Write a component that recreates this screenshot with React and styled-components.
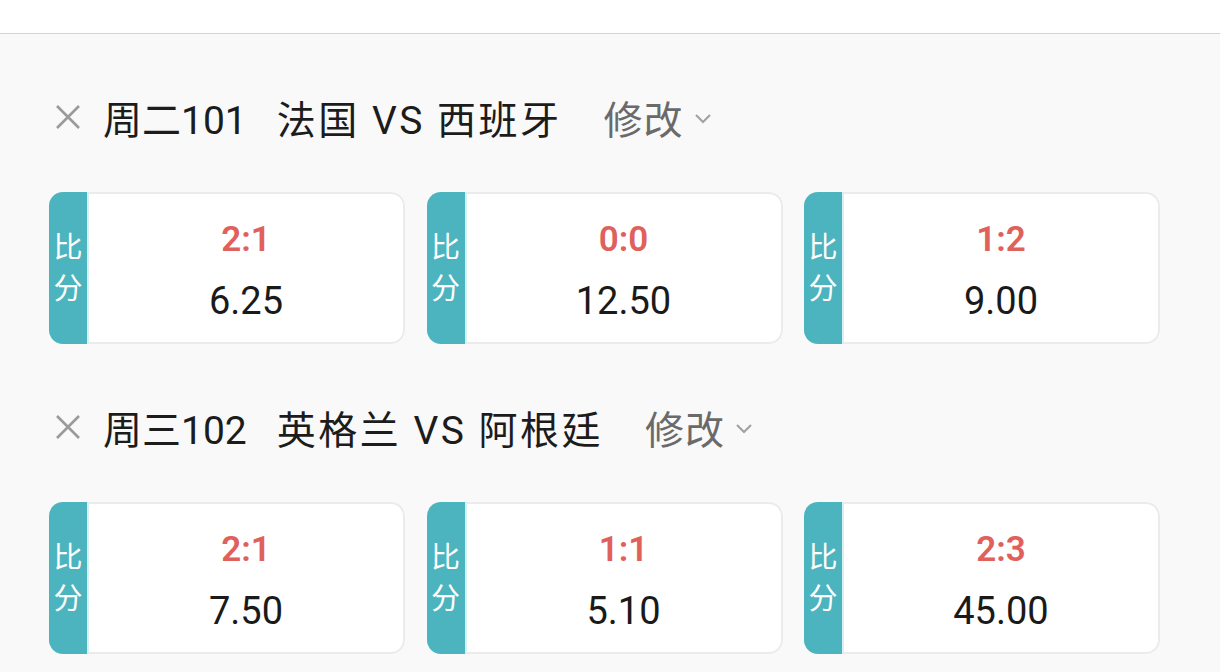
import React from "react";
import styled, { createGlobalStyle } from "styled-components";

const GlobalStyle = createGlobalStyle`
	html, body {
		margin: 0;
		padding: 0;
		background: #f9f9f9;
		font-family: Roboto, "Noto Sans CJK SC", sans-serif;
	}
`;

const Page = styled.div`
	width: 1220px;
	height: 672px;
	overflow: hidden;
	background: #f9f9f9;
`;

const TopBar = styled.div`
	height: 33px;
	background: #fff;
	border-bottom: 1px solid #d4d4d4;
`;

const Content = styled.div`
	padding: 53px 0 0 49px;
`;

const Section = styled.section`
	& + & {
		margin-top: 53px;
	}
`;

const MatchHeader = styled.div`
	display: flex;
	align-items: center;
	height: 60px;
	margin-bottom: 45px;
	color: #1c1c1c;
	font-size: 39px;
`;

const CloseIcon = styled.svg`
	width: 26px;
	height: 26px;
	margin-left: 6px;
	margin-right: 22px;
	flex-shrink: 0;
`;

const MatchNo = styled.span`
	margin-right: 30px;
`;

const Teams = styled.span`
	letter-spacing: 2.5px;
	margin-right: 42px;
`;

const Edit = styled.span`
	color: #6a6a6a;
	display: flex;
	align-items: center;
	letter-spacing: 1px;
`;

const Chevron = styled.svg`
	width: 18px;
	height: 12px;
	margin-left: 10px;
	margin-top: 4px;
`;

const Grid = styled.div`
	display: grid;
	grid-template-columns: repeat(3, 356px);
	column-gap: 21.5px;
`;

const Card = styled.div`
	display: flex;
	height: 152px;
	border-radius: 14px;
	overflow: hidden;
`;

const Tab = styled.div`
	width: 38px;
	flex-shrink: 0;
	background: #4cb4be;
	border-right: 2px solid #d9f0f2;
	color: #fff;
	font-family: "Noto Sans CJK SC", sans-serif;
	font-size: 29px;
	line-height: 41px;
	display: flex;
	flex-direction: column;
	align-items: center;
	justify-content: center;
	padding-bottom: 4px;
`;

const Body = styled.div`
	flex: 1;
	background: #fff;
	border: 2px solid #ebebeb;
	border-left: none;
	border-radius: 0 14px 14px 0;
	display: flex;
	flex-direction: column;
	align-items: center;
	justify-content: center;
	padding-top: 4px;
`;

const Score = styled.div`
	color: #e0605c;
	font-size: 35px;
	font-weight: 600;
	line-height: 40px;
	margin-bottom: 21px;
`;

const Odds = styled.div`
	color: #1a1a1a;
	font-size: 38px;
	line-height: 40px;
`;

const matches = [
	{
		no: "周二101",
		teams: "法国 VS 西班牙",
		picks: [
			{ score: "2:1", odds: "6.25" },
			{ score: "0:0", odds: "12.50" },
			{ score: "1:2", odds: "9.00" }
		]
	},
	{
		no: "周三102",
		teams: "英格兰 VS 阿根廷",
		picks: [
			{ score: "2:1", odds: "7.50" },
			{ score: "1:1", odds: "5.10" },
			{ score: "2:3", odds: "45.00" }
		]
	}
];

const App = () => {
	return (
		<Page>
			<GlobalStyle />
			<TopBar />
			<Content>
				{matches.map(m => (
					<Section key={m.no}>
						<MatchHeader>
							<CloseIcon viewBox="0 0 26 26">
								<path d="M2 2 L24 24 M24 2 L2 24" stroke="#9a9a9a" strokeWidth="2.6" fill="none" />
							</CloseIcon>
							<MatchNo>{m.no}</MatchNo>
							<Teams>{m.teams}</Teams>
							<Edit>
								修改
								<Chevron viewBox="0 0 18 12">
									<path d="M2 2 L9 9 L16 2" stroke="#a0a0a0" strokeWidth="2" fill="none" />
								</Chevron>
							</Edit>
						</MatchHeader>
						<Grid>
							{m.picks.map(p => (
								<Card key={p.score}>
									<Tab>
										<span>比</span>
										<span>分</span>
									</Tab>
									<Body>
										<Score>{p.score}</Score>
										<Odds>{p.odds}</Odds>
									</Body>
								</Card>
							))}
						</Grid>
					</Section>
				))}
			</Content>
		</Page>
	);
};

export default App;
